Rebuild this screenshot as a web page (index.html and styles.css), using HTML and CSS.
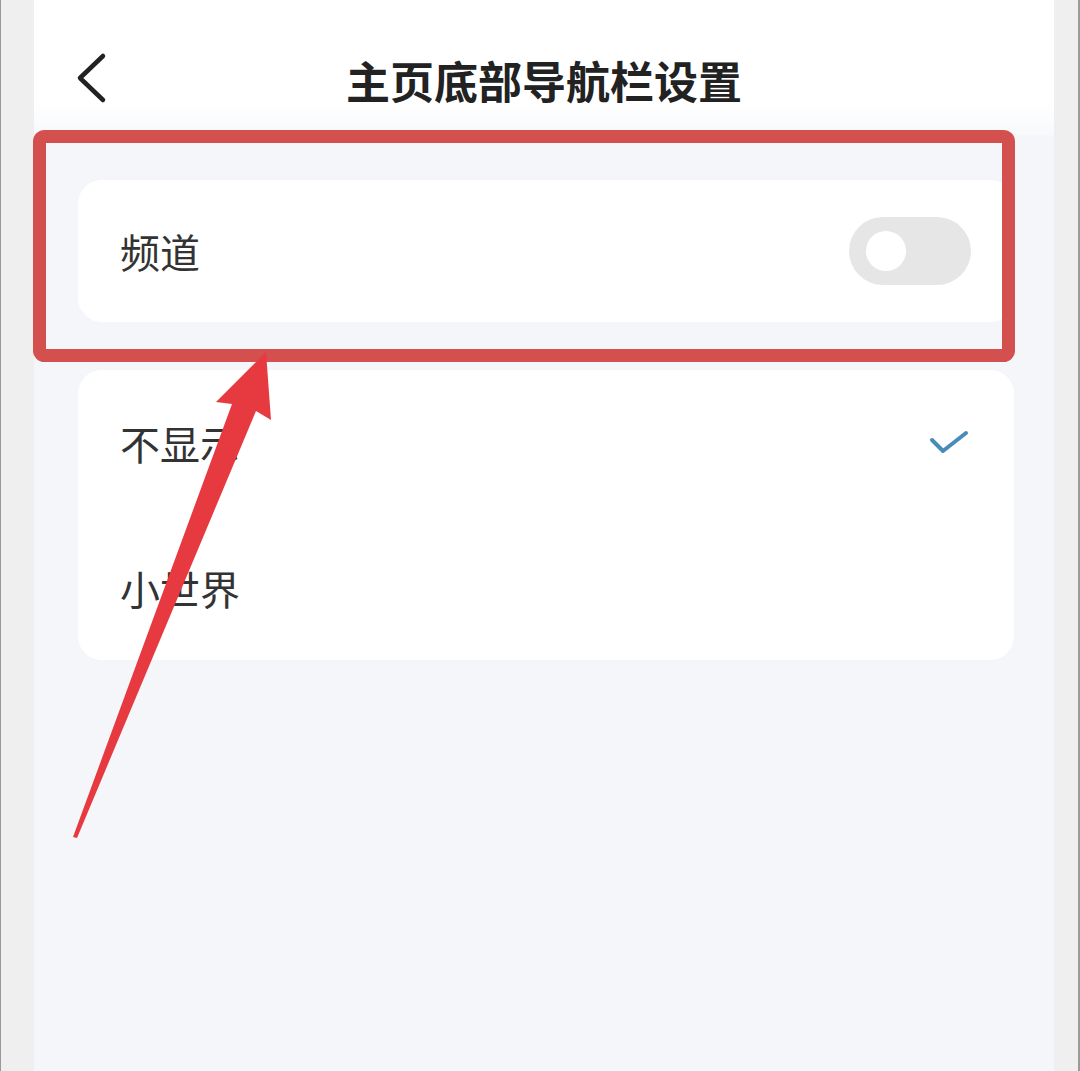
FILE: index.html
```html
<!DOCTYPE html>
<html lang="zh-CN">
<head>
    <meta charset="UTF-8">
    <meta name="viewport" content="width=device-width, initial-scale=1.0">
    <title>主页底部导航栏设置</title>
    <link rel="stylesheet" href="styles.css">
</head>
<body>
    <div class="frame">
        <div class="edge edge-left"></div>
        <div class="screen">
            <div class="header">
                <svg class="back" width="34" height="52" viewBox="0 0 34 52">
                    <polyline points="28,4 5,26 28,48" fill="none" stroke="#222" stroke-width="4.5" stroke-linecap="round" stroke-linejoin="round"/>
                </svg>
                <h1>主页底部导航栏设置</h1>
            </div>
            <div class="content">
                <div class="card">
                    <div class="row">
                        <span class="label">频道</span>
                        <div class="switch"><div class="knob"></div></div>
                    </div>
                </div>
                <div class="card">
                    <div class="row">
                        <span class="label">不显示</span>
                        <svg class="check" width="40" height="26" viewBox="0 0 40 26">
                            <polyline points="3,10 14,21 37,3" fill="none" stroke="#4a8cb8" stroke-width="4" stroke-linecap="round" stroke-linejoin="round"/>
                        </svg>
                    </div>
                    <div class="row">
                        <span class="label">小世界</span>
                    </div>
                </div>
            </div>
        </div>
        <div class="edge edge-right"></div>
    </div>

    <!-- annotation drawn over the screenshot -->
    <svg class="markup" width="1080" height="1071" viewBox="0 0 1080 1071">
        <rect x="39.5" y="136.5" width="969" height="219" rx="5" fill="none" stroke="#d4504f" stroke-width="13"/>
        <polygon points="266,352 271,420 256,411 77,838 73,837 232,404 216,402" fill="#e63a40"/>
    </svg>
</body>
</html>
```

FILE: styles.css
```css
body {
    margin: 0;
    font-family: "Noto Sans CJK SC", "Noto Sans", sans-serif;
    background: #efefef;
}
.frame {
    display: flex;
    height: 1071px;
    overflow: hidden;
}
.edge {
    background: #efefef;
}
.edge-left {
    width: 33px;
    border-left: 1px solid #9a9a9a;
}
.edge-right {
    width: 24px;
    border-right: 2px solid #9a9a9a;
}
.screen {
    flex: 1;
    display: flex;
    flex-direction: column;
    background: #f5f6fa;
}
.header {
    height: 110px;
    padding-top: 25px;
    display: flex;
    align-items: center;
    justify-content: center;
    position: relative;
    background: linear-gradient(#fff 75%, #f8f9fb);
}
.back {
    position: absolute;
    left: 41px;
    top: 52px;
}
h1 {
    margin: 0;
    font-size: 44px;
    font-weight: 700;
    color: #222;
    letter-spacing: 0;
}
.content {
    padding: 45px 40px 0 44px;
    display: flex;
    flex-direction: column;
    gap: 48px;
}
.card {
    background: #fff;
    border-radius: 24px;
}
.row {
    height: 145px;
    display: flex;
    align-items: center;
    justify-content: space-between;
    padding: 0 45px 0 42px;
}
.card:first-child .row {
    height: 142px;
    padding-right: 43px;
}
.label {
    font-size: 40px;
    color: #333;
}
.switch {
    width: 122px;
    height: 68px;
    border-radius: 34px;
    background: #e6e6e6;
    display: flex;
    align-items: center;
    padding-left: 17px;
    box-sizing: border-box;
}
.knob {
    width: 40px;
    height: 40px;
    border-radius: 50%;
    background: #fff;
}
.markup {
    position: absolute;
    top: 0;
    left: 0;
    pointer-events: none;
}
```
